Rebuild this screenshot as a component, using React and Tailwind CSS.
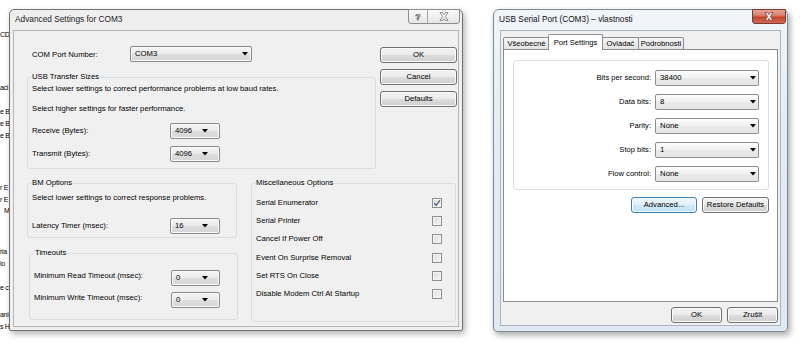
import React from "react";

const F = "font-['Liberation_Sans',Arial,sans-serif]";

function Arrow() {
  return (
    <svg width="6" height="4" viewBox="0 0 6 4" className="shrink-0">
      <path d="M0 0H6L3 3.6Z" fill="#000" />
    </svg>
  );
}

function LSelect({ value, className }) {
  return (
    <div
      className={`flex h-[16px] items-center justify-between rounded-[2px] border border-[#8a8a8a] bg-[linear-gradient(#f6f6f6,#e9e9e9_50%,#dedede_51%,#d6d6d6)] pl-[4px] text-[7.7px] leading-[10px] text-black shadow-[inset_0_0_0_1px_#fafafa] ${className}`}
    >
      <span>{value}</span>
      <Arrow />
    </div>
  );
}

function RSelect({ value }) {
  return (
    <div className="flex h-[16px] w-[104px] items-center justify-between rounded-[2px] border border-[#8e8e8e] bg-[linear-gradient(#fdfdfd,#f1f1f1_50%,#e9e9e9_51%,#e4e4e4)] pl-[4px] pr-[2px] text-[7.8px] leading-[10px] text-black">
      <span>{value}</span>
      <Arrow />
    </div>
  );
}

function Btn({ children, className }) {
  return (
    <div
      className={`flex h-[16px] items-center justify-center rounded-[3px] border border-[#707070] bg-[linear-gradient(#f2f2f2_0%,#ebebeb_50%,#dddddd_51%,#cfcfcf_100%)] text-[7.7px] leading-[10px] text-black shadow-[inset_0_0_0_1px_#fbfbfb] ${className}`}
    >
      {children}
    </div>
  );
}

function Check({ checked }) {
  return (
    <div className="flex h-[10px] w-[10px] items-center justify-center border border-[#8e8f8f] bg-[linear-gradient(135deg,#dcdcdc,#f6f6f6)] shadow-[inset_0_0_0_1px_#f4f4f4]">
      {checked && (
        <svg width="8" height="8" viewBox="0 0 8 8">
          <path d="M1.2 4.2 L3.2 6.3 L6.9 1.3" stroke="#4a5d85" strokeWidth="1.3" fill="none" />
        </svg>
      )}
    </div>
  );
}

function XGlyph({ fill, stroke }) {
  return (
    <svg width="10" height="9" viewBox="0 0 10 9">
      <path
        d="M1 0.6H3.6L5 2.6L6.4 0.6H9L6.3 4.5L9 8.4H6.4L5 6.4L3.6 8.4H1L3.7 4.5Z"
        fill={fill}
        stroke={stroke}
        strokeWidth="0.7"
        strokeLinejoin="round"
      />
    </svg>
  );
}

function Legend({ children, className }) {
  return (
    <legend className={`px-[1px] text-[7.7px] leading-[10px] text-black ${className}`}>{children}</legend>
  );
}

const frags = [
  { t: "CD", c: "mt-[29px]" },
  { t: "aci", c: "mt-[41px]" },
  { t: "e B", c: "mt-[12px]" },
  { t: "e B", c: "mt-0" },
  { t: "e B", c: "mt-0" },
  { t: "r E", c: "mt-[40px]" },
  { t: "r E", c: "mt-0" },
  { t: "M", c: "-mt-[1px] pl-[4px]" },
  { t: "ria", c: "mt-[29px]" },
  { t: "io", c: "mt-0" },
  { t: "e c", c: "mt-[12px]" },
  { t: "ani", c: "mt-[15px]" },
  { t: "s H", c: "mt-0" },
];

const misc = [
  ["Serial Enumerator", true],
  ["Serial Printer", false],
  ["Cancel If Power Off", false],
  ["Event On Surprise Removal", false],
  ["Set RTS On Close", false],
  ["Disable Modem Ctrl At Startup", false],
];

const portRows = [
  ["Bits per second:", "38400"],
  ["Data bits:", "8"],
  ["Parity:", "None"],
  ["Stop bits:", "1"],
  ["Flow control:", "None"],
];

export default function App() {
  return (
    <div className={`relative h-[350px] w-[800px] overflow-hidden bg-white text-black ${F}`}>
      {/* window fragments behind */}
      <div className="absolute left-0 top-0 flex h-[350px] w-[12px] flex-col whitespace-pre text-[7px] tracking-[-0.3px]">
        {frags.map((f, i) => (
          <div key={i} className={`h-[12px] leading-[12px] ${f.c}`}>
            {f.t}
          </div>
        ))}
      </div>

      {/* Left dialog */}
      <div className="absolute left-[9px] top-[9px] z-10 flex h-[322px] w-[454px] flex-col rounded-t-[5px] rounded-b-[2px] border border-[#727272] bg-[#efefef] shadow-[2px_3px_6px_rgba(0,0,0,0.3)]">
        <div className="flex h-[20px] shrink-0 items-start justify-between">
          <div className="pl-[5px] pt-[4px] text-[8.3px] leading-[10px] text-[#222]">Advanced Settings for COM3</div>
          <div className="-mt-[1px] mr-[2px] flex h-[15px] overflow-hidden rounded-b-[3px] border border-[#8d8d8d] bg-[linear-gradient(#fafafa,#e6e6e6)]">
            <div className="flex w-[19px] items-center justify-center border-r border-[#a8a8a8] text-[9px] font-bold leading-[10px] text-white [-webkit-text-stroke:0.6px_#555]">
              ?
            </div>
            <div className="flex w-[31px] items-center justify-center">
              <XGlyph fill="#fff" stroke="#5d5d5d" />
            </div>
          </div>
        </div>
        <div className="mx-[3px] mb-[3px] flex flex-1 flex-col border border-[#b6b6b6] bg-[#f0f0f0] pl-[13px] pr-[2px] pt-[15px]">
          {/* Row 1 */}
          <div className="flex items-start">
            <div className="flex w-[349px] flex-col">
              <div className="flex h-[16px] items-center pl-[5px]">
                <div className="w-[98px] pt-[1px] text-[7.7px] leading-[10px]">COM Port Number:</div>
                <LSelect value="COM3" className="w-[122px] pr-[3px]" />
              </div>
              <fieldset className="mt-[10px] w-[349px] rounded-[3px] border border-[#d5dfe5]">
                <Legend className="ml-[3px]">USB Transfer Sizes</Legend>
                <div className="flex flex-col px-[4px] pb-[6px] text-[7.7px]">
                  <div className="mt-[1px] leading-[12px]">
                    Select lower settings to correct performance problems at low baud rates.
                  </div>
                  <div className="mt-[8px] leading-[12px]">Select higher settings for faster performance.</div>
                  <div className="mt-[8px] flex h-[16px] items-center">
                    <div className="w-[138px] leading-[10px]">Receive (Bytes):</div>
                    <LSelect value="4096" className="w-[50px] pr-[11px]" />
                  </div>
                  <div className="mt-[7px] flex h-[16px] items-center">
                    <div className="w-[138px] leading-[10px]">Transmit (Bytes):</div>
                    <LSelect value="4096" className="w-[50px] pr-[11px]" />
                  </div>
                </div>
              </fieldset>
            </div>
            <div className="ml-[4px] mt-[1px] flex w-[77px] flex-col gap-[6px]">
              <Btn className="w-[77px]">OK</Btn>
              <Btn className="w-[77px]">Cancel</Btn>
              <Btn className="w-[77px]">Defaults</Btn>
            </div>
          </div>

          {/* Row 2 */}
          <div className="mt-[9px] flex items-start">
            <div className="flex w-[211px] flex-col">
              <fieldset className="w-[210px] rounded-[3px] border border-[#d5dfe5]">
                <Legend className="ml-[3px]">BM Options</Legend>
                <div className="flex flex-col px-[4px] pb-[3px] text-[7.7px]">
                  <div className="mt-[4px] leading-[12px]">Select lower settings to correct response problems.</div>
                  <div className="mt-[14px] flex h-[16px] items-center">
                    <div className="w-[138px] leading-[10px]">Latency Timer (msec):</div>
                    <LSelect value="16" className="w-[50px] pr-[11px]" />
                  </div>
                </div>
              </fieldset>
              <fieldset className="ml-[2px] mt-[10px] w-[209px] rounded-[3px] border border-[#d5dfe5]">
                <Legend className="ml-[4px]">Timeouts</Legend>
                <div className="flex flex-col px-[4px] pb-[11px] text-[7.7px]">
                  <div className="mt-[12px] flex h-[16px] items-center">
                    <div className="w-[137px] pb-[4px] leading-[10px]">Minimum Read Timeout (msec):</div>
                    <LSelect value="0" className="w-[49px] pr-[11px]" />
                  </div>
                  <div className="mt-[6px] flex h-[16px] items-center">
                    <div className="w-[137px] pb-[4px] leading-[10px]">Minimum Write Timeout (msec):</div>
                    <LSelect value="0" className="w-[49px] pr-[11px]" />
                  </div>
                </div>
              </fieldset>
            </div>
            <fieldset className="ml-[13px] h-[144px] w-[206px] rounded-[3px] border border-[#d5dfe5]">
              <Legend className="ml-[3px]">Miscellaneous Options</Legend>
              <div className="mt-[6px] flex flex-col pl-[4px] pr-[13px] text-[7.7px]">
                {misc.map(([label, on]) => (
                  <div key={label} className="flex h-[18.2px] items-center justify-between">
                    <span className="leading-[10px]">{label}</span>
                    <Check checked={on} />
                  </div>
                ))}
              </div>
            </fieldset>
          </div>
        </div>
      </div>

      {/* Right dialog */}
      <div className="absolute left-[493px] top-[9px] z-10 flex h-[323px] w-[295px] flex-col rounded-t-[6px] rounded-b-[4px] border border-[#7f8a98] bg-[linear-gradient(#f1f5fa,#e4ebf4_40%,#e0e8f2)] shadow-[2px_3px_6px_rgba(0,0,0,0.35)]">
        <div className="flex h-[20px] shrink-0 items-start justify-between">
          <div className="pl-[5px] pt-[4px] text-[8.3px] leading-[10px] text-[#111]">
            USB Serial Port (COM3) – vlastnosti
          </div>
          <div className="-mt-[1px] mr-[1px] flex h-[15px] w-[34px] items-center justify-center rounded-b-[3px] border border-[#7e3b32] bg-[linear-gradient(#e3a394_0%,#d88370_40%,#c4462d_55%,#cf6a52_100%)]">
            <XGlyph fill="#fff" stroke="#6e2b22" />
          </div>
        </div>
        <div className="mx-[6px] mb-[5px] flex flex-1 flex-col border border-[#a9b5c4] bg-[#f0f0f0] px-[2px] pt-[3px]">
          {/* tabs */}
          <div className="flex h-[15px] items-end text-[7.6px]">
            <div className="h-[12px] w-[47px] rounded-t-[2px] border border-b-0 border-[#898c95] bg-[linear-gradient(#f5f5f5,#e4e4e4)] text-center leading-[11px]">
              Všeobecné
            </div>
            <div className="relative z-10 -mb-[1px] -ml-[2px] h-[16px] w-[55px] rounded-t-[2px] border border-b-0 border-[#898c95] bg-white pt-[2px] text-center leading-[11px]">
              Port Settings
            </div>
            <div className="-ml-[1px] h-[12px] w-[37px] rounded-t-[2px] border border-b-0 border-[#898c95] bg-[linear-gradient(#f5f5f5,#e4e4e4)] text-center leading-[11px]">
              Ovládač
            </div>
            <div className="-ml-[1px] h-[12px] w-[46px] rounded-t-[2px] border border-b-0 border-[#898c95] bg-[linear-gradient(#f5f5f5,#e4e4e4)] text-center leading-[11px]">
              Podrobnosti
            </div>
          </div>
          {/* panel */}
          <div className="flex h-[253px] flex-col border border-[#898c95] bg-white pl-[9px] pt-[10px]">
            <div className="flex h-[130px] w-[256px] flex-col gap-[8px] rounded-[3px] border border-[#d5dfe5] pt-[9px]">
              {portRows.map(([l, v]) => (
                <div key={l} className="flex h-[16px] items-center">
                  <div className="w-[137px] text-right text-[7.6px] leading-[10px]">{l}</div>
                  <div className="ml-[4px]">
                    <RSelect value={v} />
                  </div>
                </div>
              ))}
            </div>
            <div className="mt-[7px] flex w-[256px] justify-end gap-[5px]">
              <div className="flex h-[16px] w-[66px] items-center justify-center rounded-[3px] border border-[#3c7fb1] bg-[linear-gradient(#eef7fd_0%,#e0f0fb_50%,#cfe8f8_51%,#c4e2f6_100%)] text-[7.7px] leading-[10px] shadow-[inset_0_0_0_1px_#f6fbfe]">
                Advanced...
              </div>
              <Btn className="w-[67px]">Restore Defaults</Btn>
            </div>
          </div>
          <div className="mt-[5px] flex justify-end gap-[5px]">
            <Btn className="w-[51px]">OK</Btn>
            <Btn className="w-[51px]">Zrušit</Btn>
          </div>
        </div>
      </div>
    </div>
  );
}
